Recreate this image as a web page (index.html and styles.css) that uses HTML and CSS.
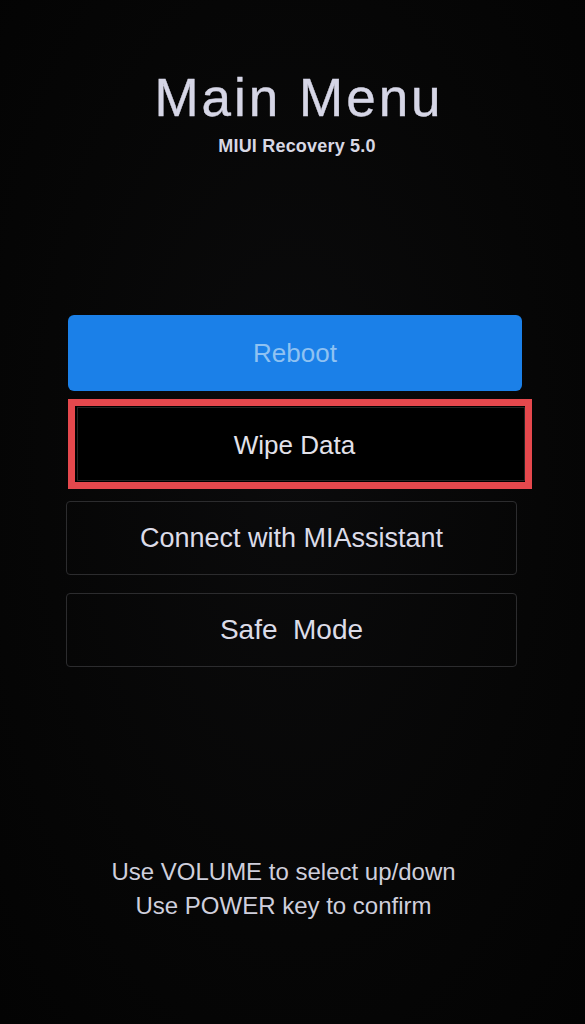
FILE: index.html
```html
<!DOCTYPE html>
<html lang="en">
<head>
<meta charset="utf-8">
<title>Main Menu</title>
<link rel="stylesheet" href="styles.css">
</head>
<body>
<div class="screen">
  <header class="head">
    <h1 class="title">Main Menu</h1>
    <p class="sub">MIUI Recovery 5.0</p>
  </header>
  <nav class="menu">
    <div class="item item-primary">Reboot</div>
    <div class="focus"><div class="item item-selected">Wipe Data</div></div>
    <div class="item item-connect">Connect with MIAssistant</div>
    <div class="item item-safe">Safe&nbsp; Mode</div>
  </nav>
  <footer class="hint">
    <p>Use VOLUME to select up/down</p>
    <p>Use POWER key to confirm</p>
  </footer>
</div>
</body>
</html>
```

FILE: styles.css
```css
html, body {
  margin: 0;
  padding: 0;
  background: #050505;
}
.screen {
  width: 585px;
  height: 1024px;
  overflow: hidden;
  background: radial-gradient(ellipse at 50% 45%, #0b0b0c 0%, #060606 60%, #030303 100%);
  font-family: "Liberation Sans", Arial, sans-serif;
  color: #dcdce6;
}
.head {
  padding-top: 68px;
  padding-left: 9px;
  text-align: center;
}
.title {
  margin: 0;
  padding-left: 4px;
  font-size: 53px;
  line-height: 60px;
  font-weight: 400;
  letter-spacing: 3px;
  color: #d6d6e6;
  -webkit-text-stroke: 0.4px #d6d6e6;
}
.sub {
  margin: 7px 0 0;
  font-size: 18px;
  line-height: 22px;
  font-weight: 700;
  letter-spacing: 0.2px;
  color: #d8d8e4;
}
.menu {
  display: flex;
  flex-direction: column;
  padding-left: 67px;
  margin-top: 158px;
}
.item {
  box-sizing: border-box;
  width: 451px;
  height: 74px;
  display: flex;
  align-items: center;
  justify-content: center;
  border: 1px solid #2c2c2e;
  border-radius: 4px;
  font-size: 26px;
  color: #dcdce8;
}
.item-primary {
  width: 454px;
  height: 76px;
  margin-left: 1px;
  border: none;
  border-radius: 6px;
  background: #1b80e8;
  color: #8fc2f2;
}
.focus {
  box-sizing: border-box;
  width: 464px;
  height: 90px;
  margin-top: 8px;
  margin-left: 1px;
  border: 7px solid #e5484d;
  padding: 1px 0 1px 2px;
  background: #000;
}
.item-selected {
  width: 100%;
  height: 100%;
  padding: 3px 13px 0 0;
  border-color: #242424;
  border-radius: 0;
  background: #000;
  color: #e2e2ea;
}
.item-connect {
  margin-top: 12px;
  margin-left: -1px;
  font-size: 27px;
}
.item-safe {
  margin-top: 18px;
  margin-left: -1px;
  font-size: 28px;
}
.hint {
  margin-top: 188px;
  padding-right: 18px;
  text-align: center;
  font-size: 24px;
  line-height: 34px;
  color: #cfcfdc;
}
.hint p {
  margin: 0;
}
```
